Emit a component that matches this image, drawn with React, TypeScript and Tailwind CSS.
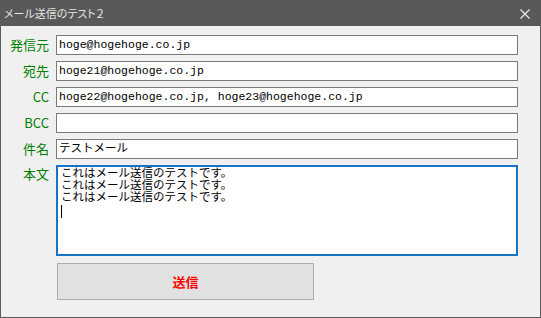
const fields = [
  { label: '発信元', value: 'hoge@hogehoge.co.jp' },
  { label: '宛先', value: 'hoge21@hogehoge.co.jp' },
  { label: 'CC', value: 'hoge22@hogehoge.co.jp, hoge23@hogehoge.co.jp' },
  { label: 'BCC', value: '' },
  { label: '件名', value: 'テストメール' },
]

const bodyLines = [
  'これはメール送信のテストです。',
  'これはメール送信のテストです。',
  'これはメール送信のテストです。',
]

const labelFont = "font-['Noto_Sans_CJK_JP',sans-serif]"
const boxFont = "font-['Liberation_Mono','Noto_Sans_CJK_JP',monospace]"

export default function App() {
  return (
    <div className="w-[541px] h-[318px] flex flex-col border border-[#5a5a5a] bg-[#f0f0f0]">
      {/* タイトルバー */}
      <div className="h-[25px] shrink-0 flex items-center justify-between bg-[#595959] pl-[3px] pr-[10px]">
        <span
          className={`text-[11px] leading-none text-[#e6e6e6] ${labelFont}`}
          style={{ fontFeatureSettings: '"palt"' }}
        >
          メール送信のテスト２
        </span>
        <svg width="10" height="10" viewBox="0 0 10 10" className="text-[#f2f2f2]">
          <path d="M0.5 0.5 L9.5 9.5 M9.5 0.5 L0.5 9.5" stroke="currentColor" strokeWidth="1.1" />
        </svg>
      </div>

      <div className="flex flex-col gap-[6px] pt-[9px]">
        {fields.map((f) => (
          <div key={f.label} className="flex items-center gap-[7px]">
            <span className={`w-[48px] text-right text-[13px] leading-[20px] text-[#008000] ${labelFont}`}>
              {f.label}
            </span>
            <div
              className={`w-[462px] h-[20px] border border-[#7a7a7a] bg-white pl-[2px] text-[11.5px] leading-[18px] text-black whitespace-pre ${boxFont}`}
            >
              {f.value}
            </div>
          </div>
        ))}

        <div className="flex items-start gap-[7px]">
          <span className={`w-[48px] text-right text-[13px] leading-[18px] text-[#008000] ${labelFont}`}>
            本文
          </span>
          <div
            className={`w-[462px] h-[91px] border-2 border-[#1874c8] bg-white pl-[3px] pt-[1px] text-[11.5px] leading-[12px] text-black ${boxFont}`}
          >
            {bodyLines.map((l, i) => (
              <div key={i}>{l}</div>
            ))}
            <div className="h-[12px] mt-[1px]">
              <span className="inline-block w-px h-[13px] bg-black" />
            </div>
          </div>
        </div>
      </div>

      <button
        className={`ml-[56px] mt-[7px] w-[257px] h-[37px] border border-[#adadad] bg-[#e1e1e1] text-[13px] font-bold text-[#ff0000] ${labelFont}`}
      >
        送信
      </button>
    </div>
  )
}
